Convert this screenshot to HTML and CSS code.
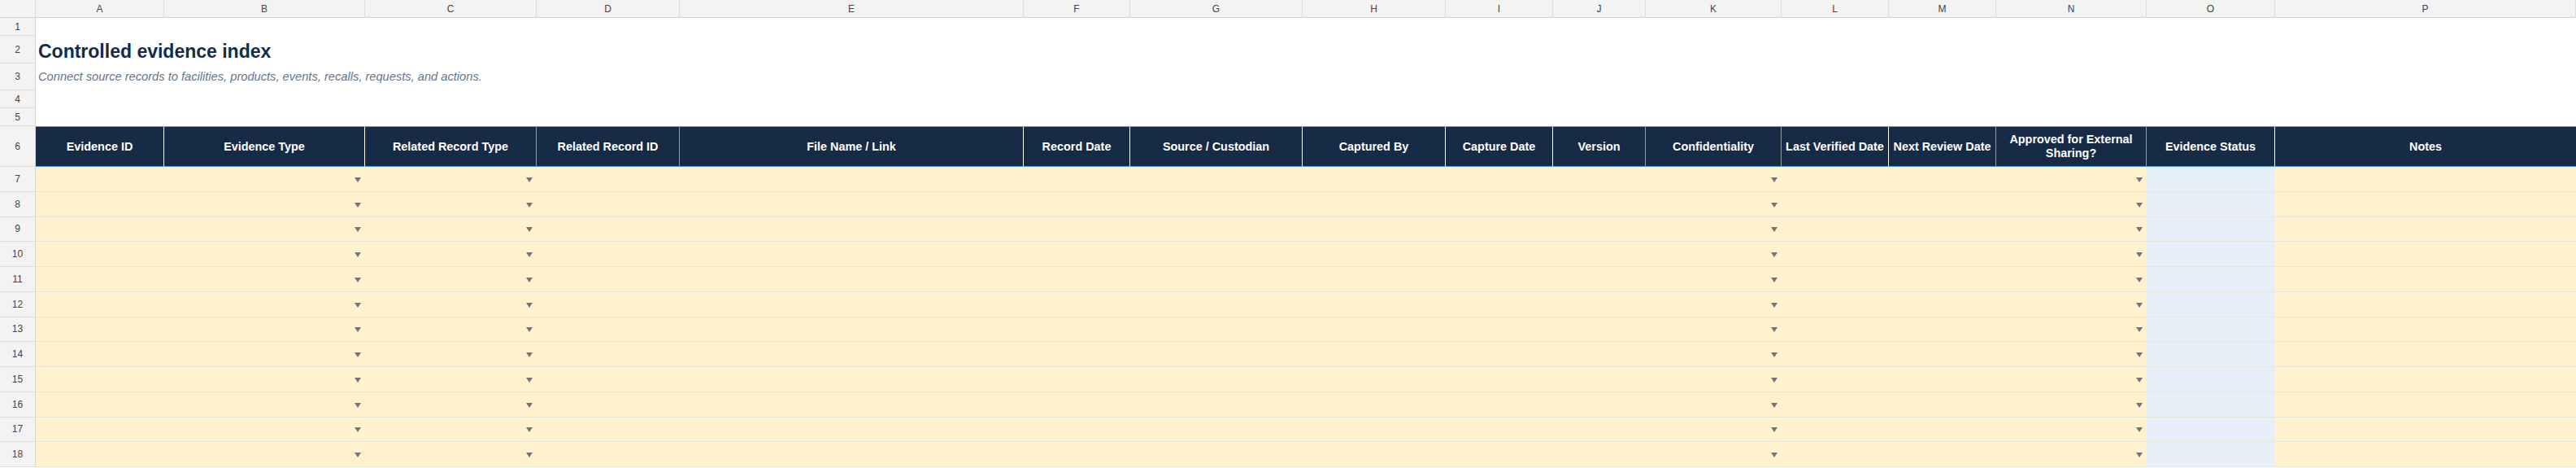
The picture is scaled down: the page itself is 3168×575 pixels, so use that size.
FILE: index.html
```html
<!DOCTYPE html>
<html lang="en">
<head>
<meta charset="utf-8">
<title>Controlled evidence index</title>
<link rel="stylesheet" href="styles.css">
</head>
<body>
<div class="sheet">
  <div class="corner"></div>
  <div class="colh">A</div><div class="colh">B</div><div class="colh">C</div><div class="colh">D</div>
  <div class="colh">E</div><div class="colh">F</div><div class="colh">G</div><div class="colh">H</div>
  <div class="colh">I</div><div class="colh">J</div><div class="colh">K</div><div class="colh">L</div>
  <div class="colh">M</div><div class="colh">N</div><div class="colh">O</div><div class="colh">P</div>

  <div class="rowh">1</div><div class="blank"></div>
  <div class="rowh">2</div><div class="blank blank-title"><h1 class="title">Controlled evidence index</h1></div>
  <div class="rowh">3</div><div class="blank"><p class="subtitle">Connect source records to facilities, products, events, recalls, requests, and actions.</p></div>
  <div class="rowh">4</div><div class="blank"></div>
  <div class="rowh">5</div><div class="blank"></div>

  <div class="rowh">6</div>
  <div class="th">Evidence ID</div>
  <div class="th">Evidence Type</div>
  <div class="th g">Related Record Type</div>
  <div class="th g">Related Record ID</div>
  <div class="th">File Name / Link</div>
  <div class="th">Record Date</div>
  <div class="th">Source / Custodian</div>
  <div class="th">Captured By</div>
  <div class="th">Capture Date</div>
  <div class="th g">Version</div>
  <div class="th g">Confidentiality</div>
  <div class="th">Last Verified Date</div>
  <div class="th g">Next Review Date</div>
  <div class="th g">Approved for External Sharing?</div>
  <div class="th">Evidence Status</div>
  <div class="th last">Notes</div>

  <div class="rowh">7</div><div class="td"></div><div class="td dd"></div><div class="td dd"></div><div class="td"></div><div class="td"></div><div class="td"></div><div class="td"></div><div class="td"></div><div class="td"></div><div class="td"></div><div class="td dd"></div><div class="td"></div><div class="td"></div><div class="td dd"></div><div class="td st"></div><div class="td"></div>
  <div class="rowh">8</div><div class="td"></div><div class="td dd"></div><div class="td dd"></div><div class="td"></div><div class="td"></div><div class="td"></div><div class="td"></div><div class="td"></div><div class="td"></div><div class="td"></div><div class="td dd"></div><div class="td"></div><div class="td"></div><div class="td dd"></div><div class="td st"></div><div class="td"></div>
  <div class="rowh">9</div><div class="td"></div><div class="td dd"></div><div class="td dd"></div><div class="td"></div><div class="td"></div><div class="td"></div><div class="td"></div><div class="td"></div><div class="td"></div><div class="td"></div><div class="td dd"></div><div class="td"></div><div class="td"></div><div class="td dd"></div><div class="td st"></div><div class="td"></div>
  <div class="rowh">10</div><div class="td"></div><div class="td dd"></div><div class="td dd"></div><div class="td"></div><div class="td"></div><div class="td"></div><div class="td"></div><div class="td"></div><div class="td"></div><div class="td"></div><div class="td dd"></div><div class="td"></div><div class="td"></div><div class="td dd"></div><div class="td st"></div><div class="td"></div>
  <div class="rowh">11</div><div class="td"></div><div class="td dd"></div><div class="td dd"></div><div class="td"></div><div class="td"></div><div class="td"></div><div class="td"></div><div class="td"></div><div class="td"></div><div class="td"></div><div class="td dd"></div><div class="td"></div><div class="td"></div><div class="td dd"></div><div class="td st"></div><div class="td"></div>
  <div class="rowh">12</div><div class="td"></div><div class="td dd"></div><div class="td dd"></div><div class="td"></div><div class="td"></div><div class="td"></div><div class="td"></div><div class="td"></div><div class="td"></div><div class="td"></div><div class="td dd"></div><div class="td"></div><div class="td"></div><div class="td dd"></div><div class="td st"></div><div class="td"></div>
  <div class="rowh">13</div><div class="td"></div><div class="td dd"></div><div class="td dd"></div><div class="td"></div><div class="td"></div><div class="td"></div><div class="td"></div><div class="td"></div><div class="td"></div><div class="td"></div><div class="td dd"></div><div class="td"></div><div class="td"></div><div class="td dd"></div><div class="td st"></div><div class="td"></div>
  <div class="rowh">14</div><div class="td"></div><div class="td dd"></div><div class="td dd"></div><div class="td"></div><div class="td"></div><div class="td"></div><div class="td"></div><div class="td"></div><div class="td"></div><div class="td"></div><div class="td dd"></div><div class="td"></div><div class="td"></div><div class="td dd"></div><div class="td st"></div><div class="td"></div>
  <div class="rowh">15</div><div class="td"></div><div class="td dd"></div><div class="td dd"></div><div class="td"></div><div class="td"></div><div class="td"></div><div class="td"></div><div class="td"></div><div class="td"></div><div class="td"></div><div class="td dd"></div><div class="td"></div><div class="td"></div><div class="td dd"></div><div class="td st"></div><div class="td"></div>
  <div class="rowh">16</div><div class="td"></div><div class="td dd"></div><div class="td dd"></div><div class="td"></div><div class="td"></div><div class="td"></div><div class="td"></div><div class="td"></div><div class="td"></div><div class="td"></div><div class="td dd"></div><div class="td"></div><div class="td"></div><div class="td dd"></div><div class="td st"></div><div class="td"></div>
  <div class="rowh">17</div><div class="td"></div><div class="td dd"></div><div class="td dd"></div><div class="td"></div><div class="td"></div><div class="td"></div><div class="td"></div><div class="td"></div><div class="td"></div><div class="td"></div><div class="td dd"></div><div class="td"></div><div class="td"></div><div class="td dd"></div><div class="td st"></div><div class="td"></div>
  <div class="rowh">18</div><div class="td"></div><div class="td dd"></div><div class="td dd"></div><div class="td"></div><div class="td"></div><div class="td"></div><div class="td"></div><div class="td"></div><div class="td"></div><div class="td"></div><div class="td dd"></div><div class="td"></div><div class="td"></div><div class="td dd"></div><div class="td st"></div><div class="td"></div>
</div>
</body>
</html>
```

FILE: styles.css
```css
html, body {
  margin: 0;
  padding: 0;
  background: #ffffff;
  overflow: hidden;
}

body {
  font-family: "Liberation Sans", Arial, sans-serif;
}

.sheet {
  display: grid;
  width: 3168px;
  grid-template-columns: 44px 158px 247px 211px 176px 423px 131px 212px 176px 132px 114px 167px 132px 132px 185px 158px 370px;
  grid-template-rows: 22px 22px 34px 33px 22px 22px 50px repeat(12, 30.75px);
}

.sheet > div {
  box-sizing: border-box;
  min-width: 0;
}

.corner,
.colh {
  background: #f3f3f3;
  border-right: 1px solid #dcdcdc;
  border-bottom: 1px solid #d2d2d2;
}

.colh {
  display: flex;
  align-items: center;
  justify-content: center;
  font-size: 12px;
  color: #444444;
}

.rowh {
  background: #f3f3f3;
  border-right: 1px solid #cdd5de;
  border-bottom: 1px solid #dedede;
  display: flex;
  align-items: center;
  justify-content: center;
  font-size: 12px;
  color: #444444;
}

.blank {
  grid-column: 2 / -1;
  background: #ffffff;
  display: flex;
  align-items: center;
  padding-left: 3px;
}

.blank-title {
  align-items: flex-end;
  padding-bottom: 3px;
}

.title {
  margin: 0;
  font-size: 23px;
  line-height: 1;
  font-weight: bold;
  color: #172a46;
  white-space: nowrap;
}

.subtitle {
  margin: 0;
  font-size: 14.67px;
  line-height: 1;
  font-style: italic;
  color: #64748b;
  white-space: nowrap;
}

.th {
  background: #172a46;
  color: #ffffff;
  font-weight: bold;
  font-size: 14.4px;
  line-height: 1.15;
  text-align: center;
  display: flex;
  align-items: center;
  justify-content: center;
  padding: 0 2px;
  border-top: 1px solid #4a9fd8;
  border-bottom: 1px solid #4a9fd8;
  border-right: 1px solid #ffffff;
}

.th.g {
  border-right-color: #8f99a6;
}

.th.last {
  border-right: none;
}

.td {
  background: #fff2cc;
  border-bottom: 1px solid #e9e6dc;
}

.td.st {
  background: #e8eff8;
}

.dd {
  display: flex;
  align-items: center;
  justify-content: flex-end;
  padding-right: 5px;
}

.dd::after {
  content: "";
  width: 0;
  height: 0;
  border-left: 4px solid transparent;
  border-right: 4px solid transparent;
  border-top: 6px solid #747474;
  margin-top: 2px;
}
```
